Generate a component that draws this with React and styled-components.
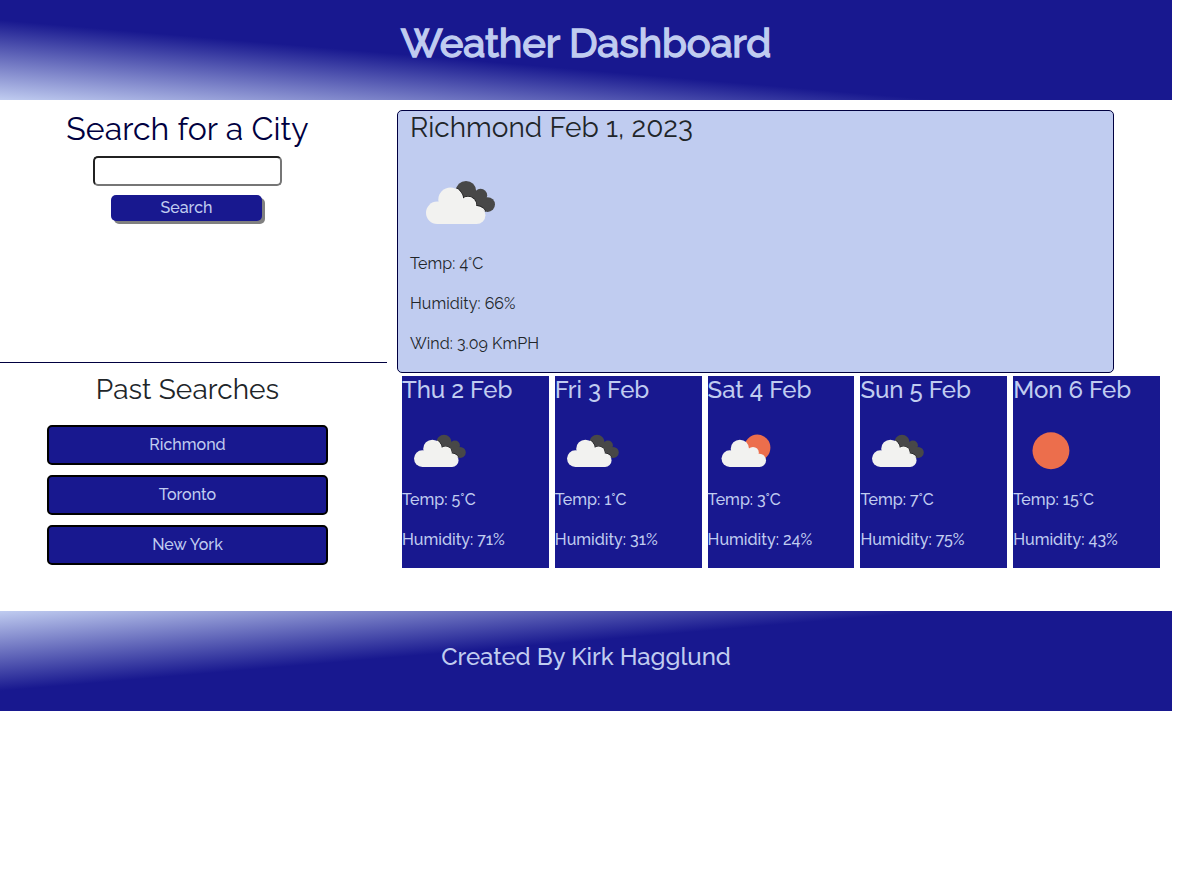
import React, { useId } from 'react';
import styled, { createGlobalStyle } from 'styled-components';

const NAVY = '#18188f';
const PALE = '#c0ccf0';
const INK = '#212529';

const GlobalStyle = createGlobalStyle`
  *, *::before, *::after { box-sizing: border-box; }
  body {
    margin: 0;
    background: #fff;
    color: ${INK};
    font-family: Raleway, Lato, sans-serif;
    font-size: 16px;
    line-height: 1.5;
  }
`;

const Page = styled.div`
  width: 1172px;
  white-space: nowrap;
`;

const Banner = styled.header`
  height: 100px;
  padding-top: 19px;
  text-align: center;
  color: ${PALE};
  background: linear-gradient(to top right, ${PALE}, ${NAVY} 40%);
`;

const Title = styled.h1`
  margin: 0;
  font-size: 40px;
  font-weight: 500;
  line-height: 48px;
  letter-spacing: -0.2px;
  -webkit-text-stroke: 1.3px ${PALE};
`;

const Main = styled.main`
  display: flex;
  height: 511px;
`;

const Sidebar = styled.aside`
  width: 387px;
  text-align: center;
`;

const SearchPanel = styled.section`
  display: flex;
  flex-direction: column;
  align-items: center;
  height: 263px;
  padding: 10px 12px 0 0;
  border-bottom: 1px solid #000040;
`;

const SearchTitle = styled.h2`
  margin: 0 0 8px;
  color: #000040;
  font-size: 32px;
  font-weight: 400;
  line-height: 38px;
  letter-spacing: 0.08px;
`;

const SearchInput = styled.input`
  width: 189px;
  height: 30px;
  padding: 1px 2px;
  border: 2px inset #767676;
  border-radius: 5px;
`;

const SearchButton = styled.button`
  width: 151px;
  height: 26px;
  margin: 9px 2px 0 0;
  padding: 0;
  border: 0;
  border-radius: 5px;
  background: ${NAVY};
  color: ${PALE};
  box-shadow: 3px 3px gray;
  font: inherit;
  font-weight: 500;
  line-height: 24px;
`;

const History = styled.section`
  display: flex;
  flex-direction: column;
  align-items: center;
  gap: 10px;
  padding: 10px 12px 0 0;
`;

const HistoryTitle = styled.h3`
  margin: 0 0 8px;
  font-size: 28px;
  font-weight: 400;
  line-height: 34px;
  letter-spacing: 0.08px;
`;

const HistoryButton = styled.button`
  width: 281px;
  height: 40px;
  padding: 0;
  border: 2px solid #000;
  border-radius: 5px;
  background: ${NAVY};
  color: ${PALE};
  font: inherit;
  font-weight: 500;
`;

const Content = styled.div`
  flex: 1;
  padding: 10px 12px 0 10px;
`;

const Today = styled.section`
  width: 717px;
  height: 263px;
  padding: 0 12px;
  border: 1px solid #000040;
  border-radius: 5px;
  background: ${PALE};
  letter-spacing: 0.06px;
`;

const TodayTitle = styled.h3`
  margin: 0 0 8px;
  font-size: 28px;
  font-weight: 400;
  line-height: 33px;
  letter-spacing: 0.03px;
`;

const Forecast = styled.div`
  display: grid;
  grid-template-columns: repeat(5, 1fr);
  gap: 6px;
  margin: 3px 0 0 5px;
`;

const Day = styled.article`
  height: 192px;
  background: ${NAVY};
  color: ${PALE};
  font-weight: 500;
`;

const DayTitle = styled.h4`
  margin: 0 0 9px;
  font-size: 24px;
  font-weight: 500;
  line-height: 28px;
  letter-spacing: -0.04px;
`;

const Reading = styled.p`
  margin: 0 0 16px;
`;

const Icon = styled.svg`
  display: block;
  width: ${(p) => p.$size}px;
  height: ${(p) => p.$size}px;
`;

const Footer = styled.footer`
  height: 100px;
  padding-top: 31px;
  text-align: center;
  color: ${PALE};
  background: linear-gradient(to bottom right, ${PALE}, ${NAVY} 40%);
  font-size: 24px;
  font-weight: 500;
  line-height: 29px;
  letter-spacing: -0.04px;
`;

function CloudLobes({ grow = 0 }) {
  return (
    <>
      <circle cx="27.2" cy="60.8" r={11.2 + grow} />
      <circle cx="40.5" cy="47.7" r={12.2 + grow} />
      <circle cx="58" cy="53" r={7.8 + grow} />
      <circle cx="66.6" cy="63.2" r={8.8 + grow} />
    </>
  );
}

function Cloud() {
  return (
    <g fill="#f2f2f0">
      <CloudLobes />
      <path d="M27 72V55H40L58 50L67 58V72Z" />
    </g>
  );
}

function BackLobes() {
  return (
    <>
      <circle cx="56" cy="39" r="10.1" />
      <circle cx="70.6" cy="43.3" r="6.6" />
      <circle cx="77.6" cy="52.6" r="7.4" />
      <path d="M52 46L66 39L76 45L80 56L66 60Z" />
    </>
  );
}

function WeatherIcon({ kind, size }) {
  const clip = useId();
  return (
    <Icon viewBox="0 0 100 100" $size={size} aria-hidden="true">
      {kind === 'sun' && <circle cx="50.6" cy="50.3" r="24.6" fill="#ec6e4c" />}
      {kind === 'partly' && (
        <>
          <circle cx="65.8" cy="46.2" r="17.4" fill="#ec6e4c" />
          <g transform="translate(2 0)"><Cloud /></g>
        </>
      )}
      {kind === 'broken' && (
        <>
          <clipPath id={clip}><BackLobes /></clipPath>
          <g fill="#484848"><BackLobes /></g>
          <g clipPath={`url(#${clip})`} fill="#222"><CloudLobes grow={1.3} /></g>
          <g clipPath={`url(#${clip})`} fill="#fff"><CloudLobes grow={0.5} /></g>
          <Cloud />
        </>
      )}
    </Icon>
  );
}

const PAST = ['Richmond', 'Toronto', 'New York'];

const DAYS = [
  { date: 'Thu 2 Feb', icon: 'broken', temp: 5, humidity: 71 },
  { date: 'Fri 3 Feb', icon: 'broken', temp: 1, humidity: 31 },
  { date: 'Sat 4 Feb', icon: 'partly', temp: 3, humidity: 24 },
  { date: 'Sun 5 Feb', icon: 'broken', temp: 7, humidity: 75 },
  { date: 'Mon 6 Feb', icon: 'sun', temp: 15, humidity: 43 },
];

export default function App() {
  return (
    <Page>
      <GlobalStyle />
      <Banner>
        <Title>Weather Dashboard</Title>
      </Banner>
      <Main>
        <Sidebar>
          <SearchPanel>
            <SearchTitle>Search for a City</SearchTitle>
            <SearchInput aria-label="City" />
            <SearchButton>Search</SearchButton>
          </SearchPanel>
          <History>
            <HistoryTitle>Past Searches</HistoryTitle>
            {PAST.map((city) => (
              <HistoryButton key={city}>{city}</HistoryButton>
            ))}
          </History>
        </Sidebar>
        <Content>
          <Today>
            <TodayTitle>Richmond Feb 1, 2023</TodayTitle>
            <WeatherIcon kind="broken" size={100} />
            <Reading>Temp: 4°C</Reading>
            <Reading>Humidity: 66%</Reading>
            <Reading>Wind: 3.09 KmPH</Reading>
          </Today>
          <Forecast>
            {DAYS.map((day) => (
              <Day key={day.date}>
                <DayTitle>{day.date}</DayTitle>
                <WeatherIcon kind={day.icon} size={75} />
                <Reading>{`Temp: ${day.temp}°C`}</Reading>
                <Reading>{`Humidity: ${day.humidity}%`}</Reading>
              </Day>
            ))}
          </Forecast>
        </Content>
      </Main>
      <Footer>Created By Kirk Hagglund</Footer>
    </Page>
  );
}
